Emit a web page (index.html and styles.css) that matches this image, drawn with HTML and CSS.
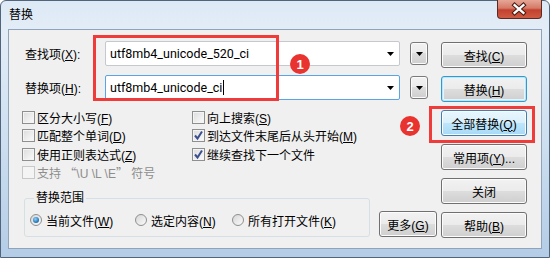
FILE: index.html
```html
<!DOCTYPE html>
<html lang="zh-CN">
<head>
    <meta charset="UTF-8">
    <title>替换</title>
    <link rel="stylesheet" href="styles.css">
</head>
<body>
    <div class="window">
        <div class="titlebar">
            <span class="title">替换</span>
            <div class="close">
                <svg width="45" height="19" viewBox="0 0 45 19">
                    <path d="M18 5 L27 13 M27 5 L18 13" stroke="#4a1a12" stroke-width="4.5" stroke-linecap="square"/>
                    <path d="M18 5 L27 13 M27 5 L18 13" stroke="#fff" stroke-width="2.4" stroke-linecap="square"/>
                </svg>
            </div>
        </div>

        <div class="client">
            <div class="main">
                <div class="field-row">
                    <span class="field-label">查找项(<u>X</u>):</span>
                    <div class="combo">
                        <span class="combo-text">utf8mb4_unicode_520_ci</span>
                        <svg class="arrow" width="7" height="4" viewBox="0 0 7 4"><path d="M0 0 H7 L3.5 4 Z"/></svg>
                    </div>
                    <div class="drop-btn">
                        <svg width="7" height="4" viewBox="0 0 7 4"><path d="M0 0 H7 L3.5 4 Z"/></svg>
                    </div>
                </div>
                <div class="field-row">
                    <span class="field-label">替换项(<u>H</u>):</span>
                    <div class="combo focus">
                        <span class="combo-text"><span>utf8mb4_unicode_ci</span><span class="caret"></span></span>
                        <svg class="arrow" width="7" height="4" viewBox="0 0 7 4"><path d="M0 0 H7 L3.5 4 Z"/></svg>
                    </div>
                    <div class="drop-btn">
                        <svg width="7" height="4" viewBox="0 0 7 4"><path d="M0 0 H7 L3.5 4 Z"/></svg>
                    </div>
                </div>

                <div class="options">
                    <label class="check"><span class="box"></span><span>区分大小写(<u>F</u>)</span></label>
                    <label class="check"><span class="box"></span><span>向上搜索(<u>S</u>)</span></label>
                    <label class="check"><span class="box"></span><span>匹配整个单词(<u>D</u>)</span></label>
                    <label class="check"><span class="box"><svg width="11" height="11" viewBox="0 0 11 11"><path d="M2 5.5 L4.5 8.5 L9 1.5" fill="none" stroke="#3b4f8f" stroke-width="2"/></svg></span><span>到达文件末尾后从头开始(<u>M</u>)</span></label>
                    <label class="check"><span class="box"></span><span>使用正则表达式(<u>Z</u>)</span></label>
                    <label class="check"><span class="box"><svg width="11" height="11" viewBox="0 0 11 11"><path d="M2 5.5 L4.5 8.5 L9 1.5" fill="none" stroke="#3b4f8f" stroke-width="2"/></svg></span><span>继续查找下一个文件</span></label>
                    <label class="check disabled"><span class="box"></span><span>支持 <span class="cjk-quote">“</span>\U \L \E<span class="cjk-quote">”</span> 符号</span></label>
                </div>

                <div class="bottom-row">
                    <fieldset class="scope">
                        <legend>替换范围</legend>
                        <div class="radios">
                            <label class="radio radio-cur"><span class="dot on"></span><span>当前文件(<u>W</u>)</span></label>
                            <label class="radio radio-sel"><span class="dot"></span><span>选定内容(<u>N</u>)</span></label>
                            <label class="radio"><span class="dot"></span><span>所有打开文件(<u>K</u>)</span></label>
                        </div>
                    </fieldset>
                    <button class="btn more"><span>更多(<u>G</u>)</span></button>
                </div>
            </div>

            <div class="buttons">
                <button class="btn"><span>查找(<u>C</u>)</span></button>
                <button class="btn default"><span>替换(<u>H</u>)</span></button>
                <button class="btn hot"><span>全部替换(<u>Q</u>)</span></button>
                <button class="btn"><span>常用项(<u>Y</u>)...</span></button>
                <button class="btn"><span>关闭</span></button>
                <button class="btn"><span>帮助(<u>B</u>)</span></button>
            </div>
        </div>

        <!-- annotations drawn over the dialog -->
        <div class="mark mark-fields"></div>
        <div class="mark mark-all"></div>
        <div class="badge badge-one">1</div>
        <div class="badge badge-two">2</div>
    </div>
</body>
</html>
```

FILE: styles.css
```css
body {
    margin: 0;
    font-family: "Liberation Sans", "Noto Sans CJK SC", sans-serif;
    font-size: 12px;
    color: #000;
    background: #fff;
}
.window {
    position: relative;
    width: 550px;
    height: 258px;
    box-sizing: border-box;
    border: 1px solid #52647c;
    border-radius: 6px 6px 0 0;
    padding: 0 7px 8px;
    display: flex;
    flex-direction: column;
    background: linear-gradient(180deg, #dde9f5 0%, #e3edf8 12%, #cddff0 55%, #b4cce6 100%);
}
.titlebar {
    height: 28px;
    display: flex;
    justify-content: space-between;
    align-items: flex-start;
}
.title {
    margin: 6px 0 0 1px;
    line-height: 16px;
    font-size: 12px;
}
.close {
    width: 45px;
    height: 19px;
    margin-top: -1px;
    box-sizing: border-box;
    border: 1px solid #5b2a22;
    border-top: none;
    border-radius: 0 0 4px 4px;
    background: linear-gradient(180deg, #e6a696 0%, #d57a68 45%, #c2412e 55%, #cf5a42 100%);
    display: flex;
}
.close svg {
    margin-left: -1px;
}
.client {
    flex: 1;
    display: flex;
    background: #f0f0f0;
    border: 1px solid #8fa3bb;
}
.main {
    width: 432px;
    box-sizing: border-box;
    padding: 11px 0 0 16px;
}
.field-row {
    display: flex;
    align-items: center;
    height: 25px;
}
.field-row + .field-row {
    margin-top: 9px;
}
.field-label {
    width: 80px;
}
.combo {
    width: 295px;
    height: 25px;
    box-sizing: border-box;
    border: 1px solid #c5c8cf;
    border-radius: 2px;
    background: #fff;
    padding: 0 4px;
    display: flex;
    align-items: center;
    font-family: Roboto, "Liberation Sans", sans-serif;
    font-size: 12.5px;
}
.combo.focus {
    border-color: #5aa3e6;
}
.combo-text {
    flex: 1;
    display: flex;
    align-items: center;
}
.caret {
    width: 1px;
    height: 15px;
    margin-left: 1px;
    background: #000;
}
.arrow {
    margin-right: 1px;
}
.drop-btn {
    width: 18px;
    height: 23px;
    margin-left: 10px;
    box-sizing: border-box;
    border: 1px solid #7a7a7a;
    border-radius: 3px;
    background: linear-gradient(#f2f2f2 0%, #ebebeb 49%, #dddddd 50%, #cfcfcf 100%);
    box-shadow: inset 0 0 0 1px #fbfbfb;
    display: flex;
    align-items: center;
    justify-content: center;
}
.options {
    display: grid;
    grid-template-columns: 170px auto;
    grid-auto-rows: 18.5px;
    align-items: center;
    margin: 8px 0 0 -3px;
}
.check {
    display: flex;
    align-items: center;
    gap: 2px;
}
.check.disabled {
    color: #8d8d8d;
}
.cjk-quote {
    font-family: "Noto Sans CJK SC", sans-serif;
}
.box {
    width: 13px;
    height: 13px;
    box-sizing: border-box;
    border: 1px solid #8e8f8f;
    background: linear-gradient(135deg, #dcdcdc, #fbfbfb);
    box-shadow: inset 0 0 0 1px #f4f4f4;
    display: flex;
    align-items: center;
    justify-content: center;
}
.check.disabled .box {
    border-color: #c8c8c8;
    background: #f4f4f4;
}
.bottom-row {
    display: flex;
    align-items: flex-end;
    margin-top: 9px;
}
.scope {
    width: 346px;
    box-sizing: border-box;
    margin: 0 0 0 -1px;
    padding: 7px 0 8px 5px;
    border: 1px solid #d5dfe5;
    border-radius: 3px;
    min-width: 0;
}
.scope legend {
    padding: 0 2px;
    margin-left: 4px;
    line-height: 14px;
}
.radios {
    display: flex;
    align-items: center;
    height: 16px;
}
.radio {
    display: flex;
    align-items: center;
    gap: 4px;
}
.radio-cur {
    width: 105px;
}
.radio-sel {
    width: 97px;
}
.dot {
    width: 12px;
    height: 12px;
    box-sizing: border-box;
    border: 1px solid #8e8f8f;
    border-radius: 50%;
    background: linear-gradient(135deg, #d6d6d6, #fbfbfb);
    display: flex;
    align-items: center;
    justify-content: center;
}
.dot.on::after {
    content: "";
    width: 6px;
    height: 6px;
    border-radius: 50%;
    background: radial-gradient(circle at 40% 35%, #8fd3f7, #2a7bbf 60%, #174f86);
}
.btn {
    height: 26px;
    box-sizing: border-box;
    padding: 0;
    border: 1px solid #707070;
    border-radius: 3px;
    background: linear-gradient(#f2f2f2 0%, #ebebeb 49%, #dddddd 50%, #cfcfcf 100%);
    box-shadow: inset 0 0 0 1px #fcfcfc;
    font: inherit;
    color: #000;
    display: flex;
    align-items: center;
    justify-content: center;
}
.btn.default {
    border-color: #3399cc;
    box-shadow: inset 0 0 0 1px #b8e6fa, inset 0 0 0 2px #e4f5fd;
}
.btn.hot {
    border-color: #3c7fb1;
    background: linear-gradient(#eaf6fd 0%, #d9f0fc 49%, #bee6fd 50%, #a7d9f5 100%);
}
.more {
    width: 58px;
    margin-left: 9px;
}
.buttons {
    width: 86px;
    display: flex;
    flex-direction: column;
    gap: 8px;
    padding-top: 12px;
}
.mark {
    position: absolute;
    border: 3px solid #f03b3b;
}
.mark-fields {
    left: 92px;
    top: 34px;
    width: 180px;
    height: 60px;
}
.mark-all {
    left: 428px;
    top: 105px;
    width: 100px;
    height: 31px;
}
.badge {
    position: absolute;
    width: 20px;
    height: 20px;
    border-radius: 50%;
    background: #e8332f;
    color: #fff;
    font-family: "Liberation Sans", sans-serif;
    font-weight: bold;
    font-size: 13px;
    display: flex;
    align-items: center;
    justify-content: center;
}
.badge-one {
    left: 289px;
    top: 53px;
}
.badge-two {
    left: 399px;
    top: 115px;
}
```
